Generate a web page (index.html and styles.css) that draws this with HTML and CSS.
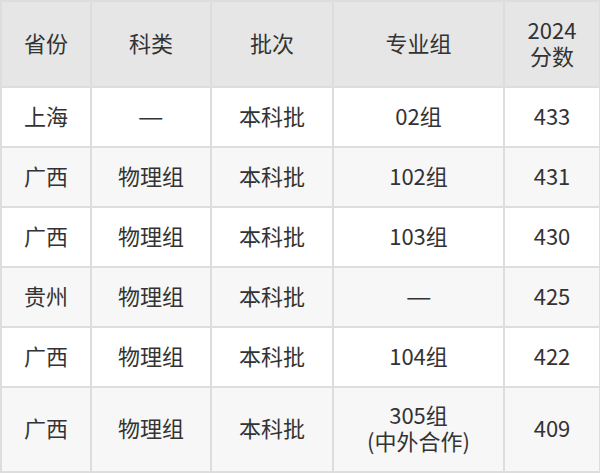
FILE: index.html
```html
<!DOCTYPE html>
<html lang="zh">
<head>
<meta charset="utf-8">
<link rel="stylesheet" href="styles.css">
</head>
<body>
<table class="score-table">
  <colgroup>
    <col class="c1"><col class="c2"><col class="c3"><col class="c4"><col class="c5">
  </colgroup>
  <thead>
    <tr class="head">
      <th>省份</th><th>科类</th><th>批次</th><th>专业组</th><th>2024<br>分数</th>
    </tr>
  </thead>
  <tbody>
    <tr class="odd"><td>上海</td><td><span class="dash">—</span></td><td>本科批</td><td>02组</td><td>433</td></tr>
    <tr class="even"><td>广西</td><td>物理组</td><td>本科批</td><td>102组</td><td>431</td></tr>
    <tr class="odd"><td>广西</td><td>物理组</td><td>本科批</td><td>103组</td><td>430</td></tr>
    <tr class="even"><td>贵州</td><td>物理组</td><td>本科批</td><td><span class="dash">—</span></td><td>425</td></tr>
    <tr class="odd"><td>广西</td><td>物理组</td><td>本科批</td><td>104组</td><td>422</td></tr>
    <tr class="even tall"><td>广西</td><td>物理组</td><td>本科批</td><td>305组<br>(中外合作)</td><td>409</td></tr>
  </tbody>
</table>
</body>
</html>
```

FILE: styles.css
```css
html, body {
  margin: 0;
  padding: 0;
  background: #ffffff;
}
.score-table {
  border-collapse: collapse;
  table-layout: fixed;
  width: 599px;
  font-family: "Noto Sans CJK SC", "Noto Sans", sans-serif;
  font-size: 22px;
  line-height: 26px;
  color: #333333;
}
.c1 { width: 90px; }
.c2 { width: 120px; }
.c3 { width: 122px; }
.c4 { width: 171px; }
.c5 { width: 96px; }
.score-table th,
.score-table td {
  border: 2px solid #dddddd;
  text-align: center;
  vertical-align: middle;
  padding: 0 0 5px 0;
  font-weight: normal;
}
.dash {
  display: inline-block;
  transform: scaleX(1.3);
}
.head { height: 86px; background: #e6e6e6; }
.odd { height: 60px; background: #ffffff; }
.even { height: 60px; background: #f7f7f7; }
.tall { height: 85px; }
```
